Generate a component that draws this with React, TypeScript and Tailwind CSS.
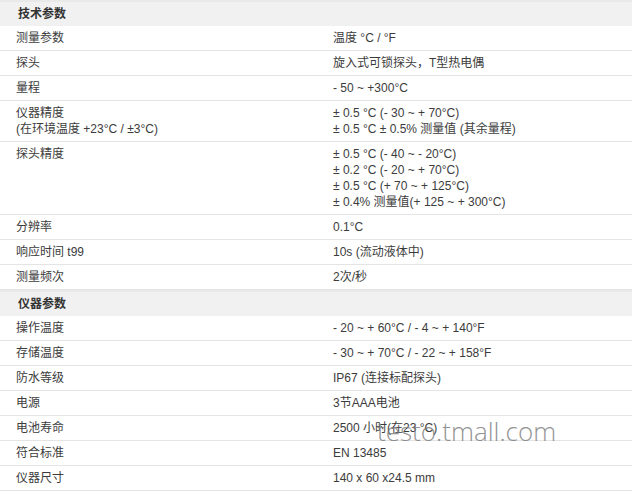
import React from "react";

type Row = { k: React.ReactNode; v: React.ReactNode };

const sec1: Row[] = [
  { k: "测量参数", v: "温度 °C / °F" },
  { k: "探头", v: "旋入式可锁探头，T型热电偶" },
  { k: "量程", v: "- 50 ~ +300°C" },
  {
    k: (
      <>
        仪器精度
        <br />
        (在环境温度 +23°C / ±3°C)
      </>
    ),
    v: (
      <>
        ± 0.5 °C (- 30 ~ + 70°C)
        <br />± 0.5 °C ± 0.5% 测量值 (其余量程)
      </>
    ),
  },
  {
    k: "探头精度",
    v: (
      <>
        ± 0.5 °C (- 40 ~ - 20°C)
        <br />± 0.2 °C (- 20 ~ + 70°C)
        <br />± 0.5 °C (+ 70 ~ + 125°C)
        <br />± 0.4% 测量值(+ 125 ~ + 300°C)
      </>
    ),
  },
  { k: "分辨率", v: "0.1°C" },
  { k: "响应时间 t99", v: "10s (流动液体中)" },
  { k: "测量频次", v: "2次/秒" },
];

const sec2: Row[] = [
  { k: "操作温度", v: "- 20 ~ + 60°C / - 4 ~ + 140°F" },
  { k: "存储温度", v: "- 30 ~ + 70°C / - 22 ~ + 158°F" },
  { k: "防水等级", v: "IP67  (连接标配探头)" },
  { k: "电源", v: "3节AAA电池" },
  { k: "电池寿命", v: "2500 小时(在23 °C)" },
  { k: "符合标准", v: "EN 13485" },
  { k: "仪器尺寸", v: "140 x 60 x24.5 mm" },
];

function Header({ title }: { title: string }) {
  return (
    <div className="h-[26px] border-t-2 border-[#e9e9e9] bg-[#f1f1f1] pl-[18px] flex items-center font-bold text-[12px] text-[#333]">
      {title}
    </div>
  );
}

function Rows({ rows }: { rows: Row[] }) {
  return (
    <>
      {rows.map((r, i) => (
        <div
          key={i}
          className="flex border-b border-[#e4e4e4] text-[12px] leading-[16px] text-[#3c3c3c] py-[4px]"
        >
          <div className="w-[317px] pl-[16px] shrink-0">{r.k}</div>
          <div className="pl-[16px]">{r.v}</div>
        </div>
      ))}
    </>
  );
}

export default function App() {
  return (
    <div
      className="relative w-[632px] h-[491px] overflow-hidden bg-white"
      style={{ fontFamily: '"Liberation Sans", "Noto Sans CJK SC", sans-serif' }}
    >
      <Header title="技术参数" />
      <Rows rows={sec1} />
      <Header title="仪器参数" />
      <Rows rows={sec2} />
      <div
        className="absolute left-[377px] top-[416px] text-[26px] leading-[30px] text-[#7a7a7a] opacity-80"
        style={{ fontFamily: '"Open Sans", sans-serif', fontWeight: 300 }}
      >
        testo.tmall.com
      </div>
    </div>
  );
}
